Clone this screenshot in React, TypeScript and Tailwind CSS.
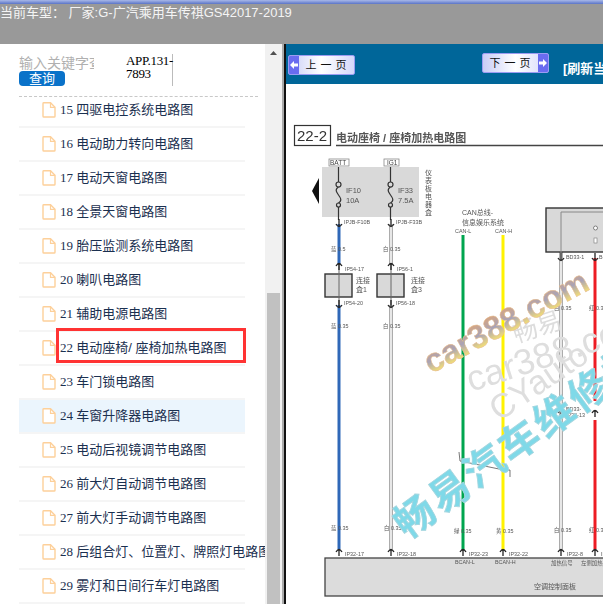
const rows = [
  { no: '15', name: '四驱电控系统电路图' },
  { no: '16', name: '电动助力转向电路图' },
  { no: '17', name: '电动天窗电路图' },
  { no: '18', name: '全景天窗电路图' },
  { no: '19', name: '胎压监测系统电路图' },
  { no: '20', name: '喇叭电路图' },
  { no: '21', name: '辅助电源电路图' },
  { no: '22', name: '电动座椅/ 座椅加热电路图' },
  { no: '23', name: '车门锁电路图' },
  { no: '24', name: '车窗升降器电路图' },
  { no: '25', name: '电动后视镜调节电路图' },
  { no: '26', name: '前大灯自动调节电路图' },
  { no: '27', name: '前大灯手动调节电路图' },
  { no: '28', name: '后组合灯、位置灯、牌照灯电路图' },
  { no: '29', name: '雾灯和日间行车灯电路图' },
];

const cjk = "font-['Liberation_Sans','Noto_Sans_CJK_SC',sans-serif]";

function FileIcon() {
  return (
    <svg width="14" height="16" viewBox="0 0 14 16" className="shrink-0">
      <path d="M1 1.5 Q1 .8 1.8 .8 H8.5 L13 5.3 V14.2 Q13 15 12.2 15 H1.8 Q1 15 1 14.2 Z" fill="#fff" stroke="#fdd09a" strokeWidth="1.4" />
      <path d="M8.5 .8 V5.3 H13" fill="none" stroke="#fdd09a" strokeWidth="1.2" />
    </svg>
  );
}

function PageButton({ label, dir }: { label: string; dir: 'prev' | 'next' }) {
  const arrow = (
    <span className="flex h-full w-[10px] shrink-0 items-center justify-center bg-[#6a6cf0]">
      <svg width="8" height="8" viewBox="0 0 8 8">
        <path d={dir === 'prev' ? 'M4 0 L0 4 L4 8 V5.5 H8 V2.5 H4 Z' : 'M4 0 L8 4 L4 8 V5.5 H0 V2.5 H4 Z'} fill="#fff" />
      </svg>
    </span>
  );
  return (
    <div className="flex h-[20px] w-[67px] items-center overflow-hidden rounded-[2px] border border-[#9c9cf2] bg-gradient-to-r from-[#c9cdf6] via-white to-[#d5d8fa]">
      {dir === 'prev' && arrow}
      <span className={`flex-1 whitespace-nowrap pl-[3px] text-center text-[11px] leading-none tracking-[4px] text-[#111] ${cjk}`}>{label}</span>
      {dir === 'next' && arrow}
    </div>
  );
}

function Wire({ x, y1, y2, color }: { x: number; y1: number; y2: number; color: string }) {
  return <line x1={x} x2={x} y1={y1} y2={y2} stroke={color} strokeWidth="3" />;
}

function WhiteWire({ x, y1, y2 }: { x: number; y1: number; y2: number }) {
  return (
    <g>
      <line x1={x} x2={x} y1={y1} y2={y2} stroke="#888" strokeWidth="3.4" />
      <line x1={x} x2={x} y1={y1} y2={y2} stroke="#fff" strokeWidth="1.6" />
    </g>
  );
}

// little connector hook, up = arc opens downward
function Pin({ x, y, up }: { x: number; y: number; up?: boolean }) {
  return up ? (
    <path d={`M${x - 3} ${y + 2} Q${x} ${y - 3} ${x + 3} ${y + 2} M${x} ${y} V${y + 6}`} fill="none" stroke="#222" strokeWidth="1.3" />
  ) : (
    <path d={`M${x - 3} ${y + 2} Q${x} ${y + 7} ${x + 3} ${y + 2} M${x} ${y - 3} V${y + 4}`} fill="none" stroke="#222" strokeWidth="1.3" />
  );
}

function Label({ x, y, children, size = 5.4, fill = '#555' }: { x: number; y: number; children: string; size?: number; fill?: string }) {
  return (
    <text x={x} y={y} fontSize={size} fill={fill}>
      {children}
    </text>
  );
}

function Fuse({ x }: { x: number }) {
  return (
    <g fill="none" stroke="#333" strokeWidth="1.2">
      <path d={`M${x} 167 V182 M${x} 187 C${x - 8} 192 ${x + 8} 198 ${x} 203 M${x} 207 V220`} />
      <circle cx={x} cy={184.5} r="2.5" />
      <circle cx={x} cy={205} r="2" />
    </g>
  );
}

function Diagram() {
  return (
    <svg viewBox="285 84 318 520" className="block h-[520px] w-[318px] blur-[0.35px]" fontFamily="'Liberation Sans','Noto Sans CJK SC',sans-serif">
      <defs>
        <linearGradient id="mark" gradientUnits="userSpaceOnUse" x1="430" y1="348" x2="430" y2="374">
          <stop offset="0" stopColor="#e0a676" />
          <stop offset=".55" stopColor="#a9a3b6" />
          <stop offset="1" stopColor="#f1dd78" />
        </linearGradient>
      </defs>
      <rect x="293.5" y="125.5" width="36" height="20" fill="#fff" stroke="#333" strokeWidth="1.2" />
      <text x="296" y="141" fontSize="15" fill="#333">22-2</text>
      <text x="335" y="142" fontSize="11" fontWeight="700" fill="#555">电动座椅 / 座椅加热电路图</text>
      <line x1="335" x2="603" y1="145.5" y2="145.5" stroke="#444" strokeWidth="1.3" />

      <rect x="321" y="167" width="97" height="50" fill="#d9d9d9" />
      <rect x="328" y="159" width="20" height="7" fill="#fff" stroke="#888" strokeWidth=".8" />
      <rect x="383" y="159" width="15" height="7" fill="#fff" stroke="#888" strokeWidth=".8" />
      <text x="329" y="165" fontSize="6.5" fill="#444">BATT</text>
      <text x="386" y="165" fontSize="6.5" fill="#444">IG1</text>
      <path d="M318 178 L311 191 L318 204 Z" fill="#111" />
      <Fuse x={337.5} />
      <Fuse x={389.5} />
      <Label x={345} y={193} size={7.5}>IF10</Label>
      <Label x={345} y={203} size={7.5}>10A</Label>
      <Label x={397} y={193} size={7.5}>IF33</Label>
      <Label x={397} y={203} size={7.5}>7.5A</Label>
      {['仪', '表', '板', '电', '器', '盒'].map((c, i) => (
        <text key={c} x="424" y={175 + i * 8} fontSize="7" fill="#555">{c}</text>
      ))}

      <Wire x={338} y1={224} y2={264} color="#2f68b8" />
      <Wire x={338} y1={305} y2={549} color="#2f68b8" />
      <WhiteWire x={390} y1={224} y2={264} />
      <WhiteWire x={390} y1={305} y2={549} />
      <Wire x={462} y1={235} y2={550} color="#00a54f" />
      <Wire x={502} y1={235} y2={550} color="#fff200" />
      <WhiteWire x={560} y1={252} y2={549} />
      <Wire x={594} y1={258} y2={401} color="#ed1c24" />
      <Wire x={594} y1={420} y2={549} color="#ed1c24" />

      <rect x="324" y="274" width="27" height="23" fill="#d9d9d9" stroke="#333" strokeWidth="1.4" />
      <rect x="376" y="274" width="27" height="23" fill="#d9d9d9" stroke="#333" strokeWidth="1.4" />
      <line x1="338" x2="338" y1="264" y2="305" stroke="#666" strokeWidth="1" />
      <line x1="390" x2="390" y1="264" y2="305" stroke="#666" strokeWidth="1" />
      <Label x={355} y={283} size={7}>连接</Label>
      <Label x={355} y={292} size={7}>盒1</Label>
      <Label x={410} y={283} size={7}>连接</Label>
      <Label x={410} y={292} size={7}>盒3</Label>

      {[
        [338, 222, 'IPJB-F10B'],
        [390, 222, 'IPJB-F33B'],
        [338, 303, 'IP54-20'],
        [390, 303, 'IP56-18'],
      ].map(([x, y, t]) => (
        <g key={t as string}>
          <Pin x={x as number} y={y as number} />
          <Label x={(x as number) + 5} y={(y as number) + 2}>{t as string}</Label>
        </g>
      ))}
      {[
        [338, 264, 'IP54-17'],
        [390, 264, 'IP56-1'],
      ].map(([x, y, t]) => (
        <g key={t as string}>
          <Pin x={x as number} y={y as number} up />
          <Label x={(x as number) + 6} y={(y as number) + 7}>{t as string}</Label>
        </g>
      ))}
      <Label x={330} y={251}>蓝 0.5</Label>
      <Label x={382} y={251}>白 0.35</Label>
      <Label x={330} y={328}>蓝 0.35</Label>
      <Label x={382} y={328}>白 0.35</Label>

      <Label x={461} y={215} size={7}>CAN总线-</Label>
      <Label x={461} y={225} size={7}>信息娱乐系统</Label>
      <Label x={454} y={233}>CAN-L</Label>
      <Label x={494} y={233}>CAN-H</Label>

      <rect x="545" y="208" width="60" height="44" fill="#d9d9d9" stroke="#333" strokeWidth="1.4" />
      <path d="M560 252 V212 H605" fill="none" stroke="#888" strokeWidth="1" />
      <circle cx="594.5" cy="228" r="2" fill="#fff" stroke="#555" strokeWidth=".7" />
      <rect x="593" y="238" width="3" height="5" fill="#fff" stroke="#777" strokeWidth=".6" />
      <Pin x={560} y={256} />
      <Pin x={594} y={256} />
      <Label x={565} y={259}>BD33-1</Label>
      <Label x={598} y={259}>B</Label>
      <Label x={553} y={310}>白 0.35</Label>
      <Label x={588} y={310}>红 0.35</Label>
      <Pin x={560} y={411} up />
      <Pin x={594} y={411} up />
      <Label x={565} y={411}>BD33-</Label>
      <Label x={565} y={417}>IP32-13</Label>

      <rect x="324" y="558" width="285" height="38" fill="#dcdcdc" stroke="#444" strokeWidth="1.3" />
      {[
        [338, 'IP32-17', '蓝 0.35', 330, 530],
        [390, 'IP32-18', '白 0.35', 383, 530],
        [462, 'IP32-23', '绿 0.35', 453, 533],
        [502, 'IP32-22', '黄 0.35', 495, 533],
        [560, 'IP32-8', '白 0.35', 553, 532],
        [594, 'IP', '红 0.35', 588, 532],
      ].map(([x, pin, t, lx, ly]) => (
        <g key={pin as string}>
          <Pin x={x as number} y={550} up />
          <Label x={(x as number) + 6} y={556}>{pin as string}</Label>
          <Label x={lx as number} y={ly as number}>{t as string}</Label>
        </g>
      ))}
      <Label x={454} y={564}>BCAN-L</Label>
      <Label x={494} y={564}>BCAN-H</Label>
      <Label x={550} y={565}>加热信号</Label>
      <Label x={580} y={565}>左侧加热</Label>
      <Label x={533} y={589} size={7}>空调控制面板</Label>

      <path d="M458 452 L459 461 L503 470 L509 470 V477" fill="none" stroke="#555" strokeWidth=".8" />

      {/* watermarks */}
      <g transform="rotate(-18 470 392)">
        <text x="470" y="392" fontSize="36" fill="#dedede" fontFamily="'Liberation Sans',sans-serif">car388.com</text>
      </g>
      <g transform="rotate(-34 498 422)">
        <text x="498" y="422" fontSize="34" fill="#dedede" fontFamily="'Liberation Sans',sans-serif">CYauto</text>
      </g>
      <g transform="rotate(-18 515 343)">
        <text x="515" y="343" fontSize="25" fill="#ddd">畅易</text>
      </g>
      <g transform="rotate(-28 430 374)">
        <text x="430" y="374" fontSize="33" fontWeight="700" fill="url(#mark)" stroke="#e6bd92" strokeWidth=".5" fontFamily="'Liberation Sans',sans-serif">car388.com</text>
      </g>
      <g transform="rotate(-36 406 540)">
        <text x="406" y="540" fontSize="40" letterSpacing="3" fontWeight="700" fill="#7fd9e8" stroke="#a5d5de" strokeWidth=".8">畅易汽车维修技</text>
      </g>
    </svg>
  );
}

export default function App() {
  return (
    <div className={`relative flex h-[604px] w-[603px] flex-col overflow-hidden bg-white ${cjk}`}>
      <header className="h-[44px] shrink-0 bg-[#999999]">
        <div className="h-[4px] bg-gradient-to-b from-[#a9b8e8] to-[#5b74c6]" />
        <p className="whitespace-pre text-[13px] leading-[17px] text-[#f4f4f4]">当前车型： 厂家:G-广汽乘用车传祺GS42017-2019</p>
      </header>

      <div className="flex min-h-0 flex-1">
        <aside className="flex w-[284px] shrink-0">
          <div className="w-[265px] shrink-0 overflow-hidden">
            <div className="ml-[19px] flex h-[53px] w-[239px] border-b border-dashed border-[#c8c8c8]">
              <div className="w-[75px] overflow-hidden pt-[12px]">
                <div className="h-[15px] whitespace-nowrap text-[14px] leading-[15px] text-[#b0b0b0]">输入关键字查询</div>
                <button className="block h-[15px] w-[46px] rounded-[4px] bg-[#0a72c9] text-[13px] leading-[15px] text-white">查询</button>
              </div>
              <div className="ml-[32px] mt-[10px] h-[32px] w-[47px] border-r border-[#bbbbbb] font-['Liberation_Serif',serif] text-[13px] leading-[13px] tracking-[-0.3px] text-black">
                APP.131-
                <br />
                7893
              </div>
            </div>

            <ul className="-mt-[3px]">
              {rows.map((r) => (
                <li
                  key={r.no}
                  className={`ml-[19px] flex h-[34px] w-[226px] items-center gap-[4px] whitespace-nowrap border-b-2 border-[#f5f5f5] pb-[1px] pl-[23px] text-[13px] text-[#1b3050] ${r.no === '24' ? 'bg-[#ebf5fd]' : ''}`}
                >
                  <FileIcon />
                  <span>
                    <span className="font-['Liberation_Serif',serif]">{r.no} </span>
                    {r.name}
                  </span>
                </li>
              ))}
            </ul>
          </div>

          <div className="flex w-[19px] shrink-0 flex-col border-r-2 border-[#aaaaaa] bg-[#f1f1f1] pl-[2px] pr-[2px]">
            <svg width="13" height="16" viewBox="0 0 13 16" className="shrink-0">
              <path d="M3 11 L6.5 7 L10 11 Z" fill="#505050" />
            </svg>
            <div className="mt-[233px] flex-1 bg-[#c1c1c1]" />
          </div>
        </aside>

        <main className="min-w-0 flex-1 border-l-2 border-[#111]">
          <div className="flex h-[40px] bg-[#006699]">
            <div className="ml-[2px] mt-[11px]">
              <PageButton label="上一页" dir="prev" />
            </div>
            <div className="ml-[127px] mt-[9px]">
              <PageButton label="下一页" dir="next" />
            </div>
            <span className="ml-[14px] mt-[16px] whitespace-nowrap text-[13px] font-bold leading-[18px] text-white">[刷新当前</span>
          </div>
          <Diagram />
        </main>
      </div>

      <div className="absolute left-[56px] top-[328px] h-[35px] w-[190px] border-[3px] border-[#ff3333]" />
    </div>
  );
}
